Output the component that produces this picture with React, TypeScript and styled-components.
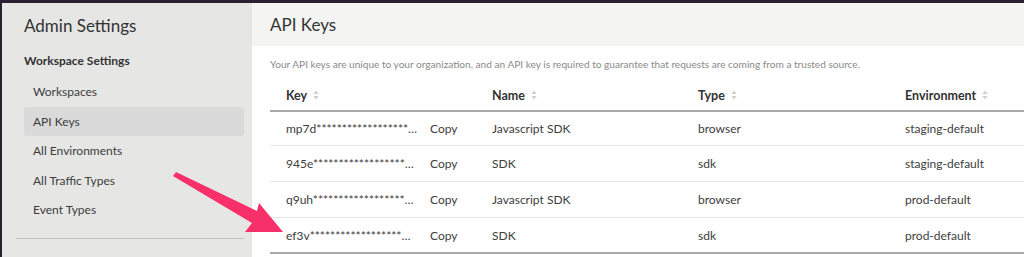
import React from "react";
import styled, { createGlobalStyle } from "styled-components";

const Global = createGlobalStyle`
  html, body { margin: 0; padding: 0; background: #2a2030; }
  body { font-family: Lato, "Open Sans", sans-serif; -webkit-font-smoothing: antialiased; }
  * { box-sizing: border-box; }
`;

const Frame = styled.div`
  position: relative;
  width: 1022px;
  margin-top: 3px;
  margin-left: 2px;
  height: 254px;
  display: flex;
  overflow: hidden;
  background: #ffffff;
`;

const Sidebar = styled.aside`
  width: 250px;
  flex: none;
  background: #e6e6e5;
  padding: 12px 8px 0 14px;
  display: flex;
  flex-direction: column;
`;

const SideTitle = styled.h1`
  margin: 0 0 0 8px;
  font-size: 17px;
  line-height: 22px;
  font-weight: 400;
  color: #333;
`;

const SectionTitle = styled.h2`
  margin: 14px 0 0 8px;
  font-size: 12px;
  line-height: 20px;
  font-weight: 700;
  color: #333;
`;

const NavList = styled.ul`
  list-style: none;
  margin: 6px 0 0 8px;
  padding: 0;
  display: flex;
  flex-direction: column;
`;

const NavItem = styled.li<{ $active?: boolean }>`
  height: 29.5px;
  display: flex;
  align-items: center;
  padding-left: 9px;
  border-radius: 3px;
  font-size: 12px;
  color: #3d3d3d;
  background: ${(p) => (p.$active ? "#dadada" : "transparent")};
`;

const Divider = styled.hr`
  margin: 13px 0 0 0;
  border: none;
  border-top: 1px solid #c2c2c2;
  width: 228px;
`;

const Main = styled.main`
  flex: 1;
  min-width: 0;
  display: flex;
  flex-direction: column;
`;

const Header = styled.header`
  height: 43px;
  flex: none;
  background: #f4f4f3;
  display: flex;
  align-items: center;
  padding-left: 18px;
`;

const PageTitle = styled.h1`
  margin: 0;
  font-size: 17px;
  font-weight: 400;
  color: #333;
`;

const Content = styled.div`
  padding: 10px 0 0 18px;
`;

const Description = styled.p`
  margin: 0;
  font-size: 10.1px;
  line-height: 16px;
  color: #8a8a8a;
  white-space: nowrap;
`;

const Table = styled.div`
  margin-top: 8px;
  width: 840px;
`;

const Row = styled.div<{ $head?: boolean; $last?: boolean; $first?: boolean }>`
  display: grid;
  grid-template-columns: 206px 206px 207px 1fr;
  align-items: center;
  height: ${(p) => (p.$head ? "32px" : p.$first ? "34px" : "36px")};
  border-bottom: ${(p) =>
    p.$head || p.$last ? "2px solid #a9a9a9" : "1px solid #e6e6e6"};
  font-size: 12px;
  color: #3d3d3d;
`;

const HeadCell = styled.div`
  padding-left: 16px;
  font-size: 12.5px;
  font-weight: 700;
  color: #333;
  display: flex;
  align-items: center;
  gap: 6px;
`;

const Cell = styled.div`
  padding-left: 16px;
  white-space: nowrap;
  display: flex;
  align-items: center;
`;

const KeyText = styled.span`
  width: 144px;
  white-space: nowrap;
`;

const CopyLink = styled.span`
  color: #3d3d3d;
`;

const ArrowSvg = styled.svg`
  position: absolute;
  left: -2px;
  top: -3px;
  pointer-events: none;
`;

const SortIcon = () => (
  <svg width="6" height="10" viewBox="0 0 6 10">
    <path d="M3 0.5 L5.6 4 H0.4 Z" fill="#cfcfcf" />
    <path d="M3 9.5 L5.6 6 H0.4 Z" fill="#cfcfcf" />
  </svg>
);

const rows = [
  { key: "mp7d******************…", name: "Javascript SDK", type: "browser", env: "staging-default" },
  { key: "945e******************…", name: "SDK", type: "sdk", env: "staging-default" },
  { key: "q9uh******************…", name: "Javascript SDK", type: "browser", env: "prod-default" },
  { key: "ef3v******************…", name: "SDK", type: "sdk", env: "prod-default" },
];

export default function App() {
  return (
    <>
      <Global />
      <Frame>
        <Sidebar>
          <SideTitle>Admin Settings</SideTitle>
          <SectionTitle>Workspace Settings</SectionTitle>
          <NavList>
            <NavItem>Workspaces</NavItem>
            <NavItem $active>API Keys</NavItem>
            <NavItem>All Environments</NavItem>
            <NavItem>All Traffic Types</NavItem>
            <NavItem>Event Types</NavItem>
          </NavList>
          <Divider />
        </Sidebar>
        <Main>
          <Header>
            <PageTitle>API Keys</PageTitle>
          </Header>
          <Content>
            <Description>
              Your API keys are unique to your organization, and an API key is required to guarantee that requests are coming from a trusted source.
            </Description>
            <Table>
              <Row $head>
                <HeadCell>Key <SortIcon /></HeadCell>
                <HeadCell>Name <SortIcon /></HeadCell>
                <HeadCell>Type <SortIcon /></HeadCell>
                <HeadCell>Environment <SortIcon /></HeadCell>
              </Row>
              {rows.map((r, i) => (
                <Row key={i} $first={i === 0} $last={i === rows.length - 1}>
                  <Cell>
                    <KeyText>{r.key}</KeyText>
                    <CopyLink>Copy</CopyLink>
                  </Cell>
                  <Cell>{r.name}</Cell>
                  <Cell>{r.type}</Cell>
                  <Cell>{r.env}</Cell>
                </Row>
              ))}
            </Table>
          </Content>
        </Main>
        <ArrowSvg width="1024" height="257" viewBox="0 0 1024 257">
          <path
            d="M173 176 L176 172 L257 211 L259 203 L283 232 L245 232 L252 223 Z"
            fill="#f8306a"
          />
        </ArrowSvg>
      </Frame>
    </>
  );
}
